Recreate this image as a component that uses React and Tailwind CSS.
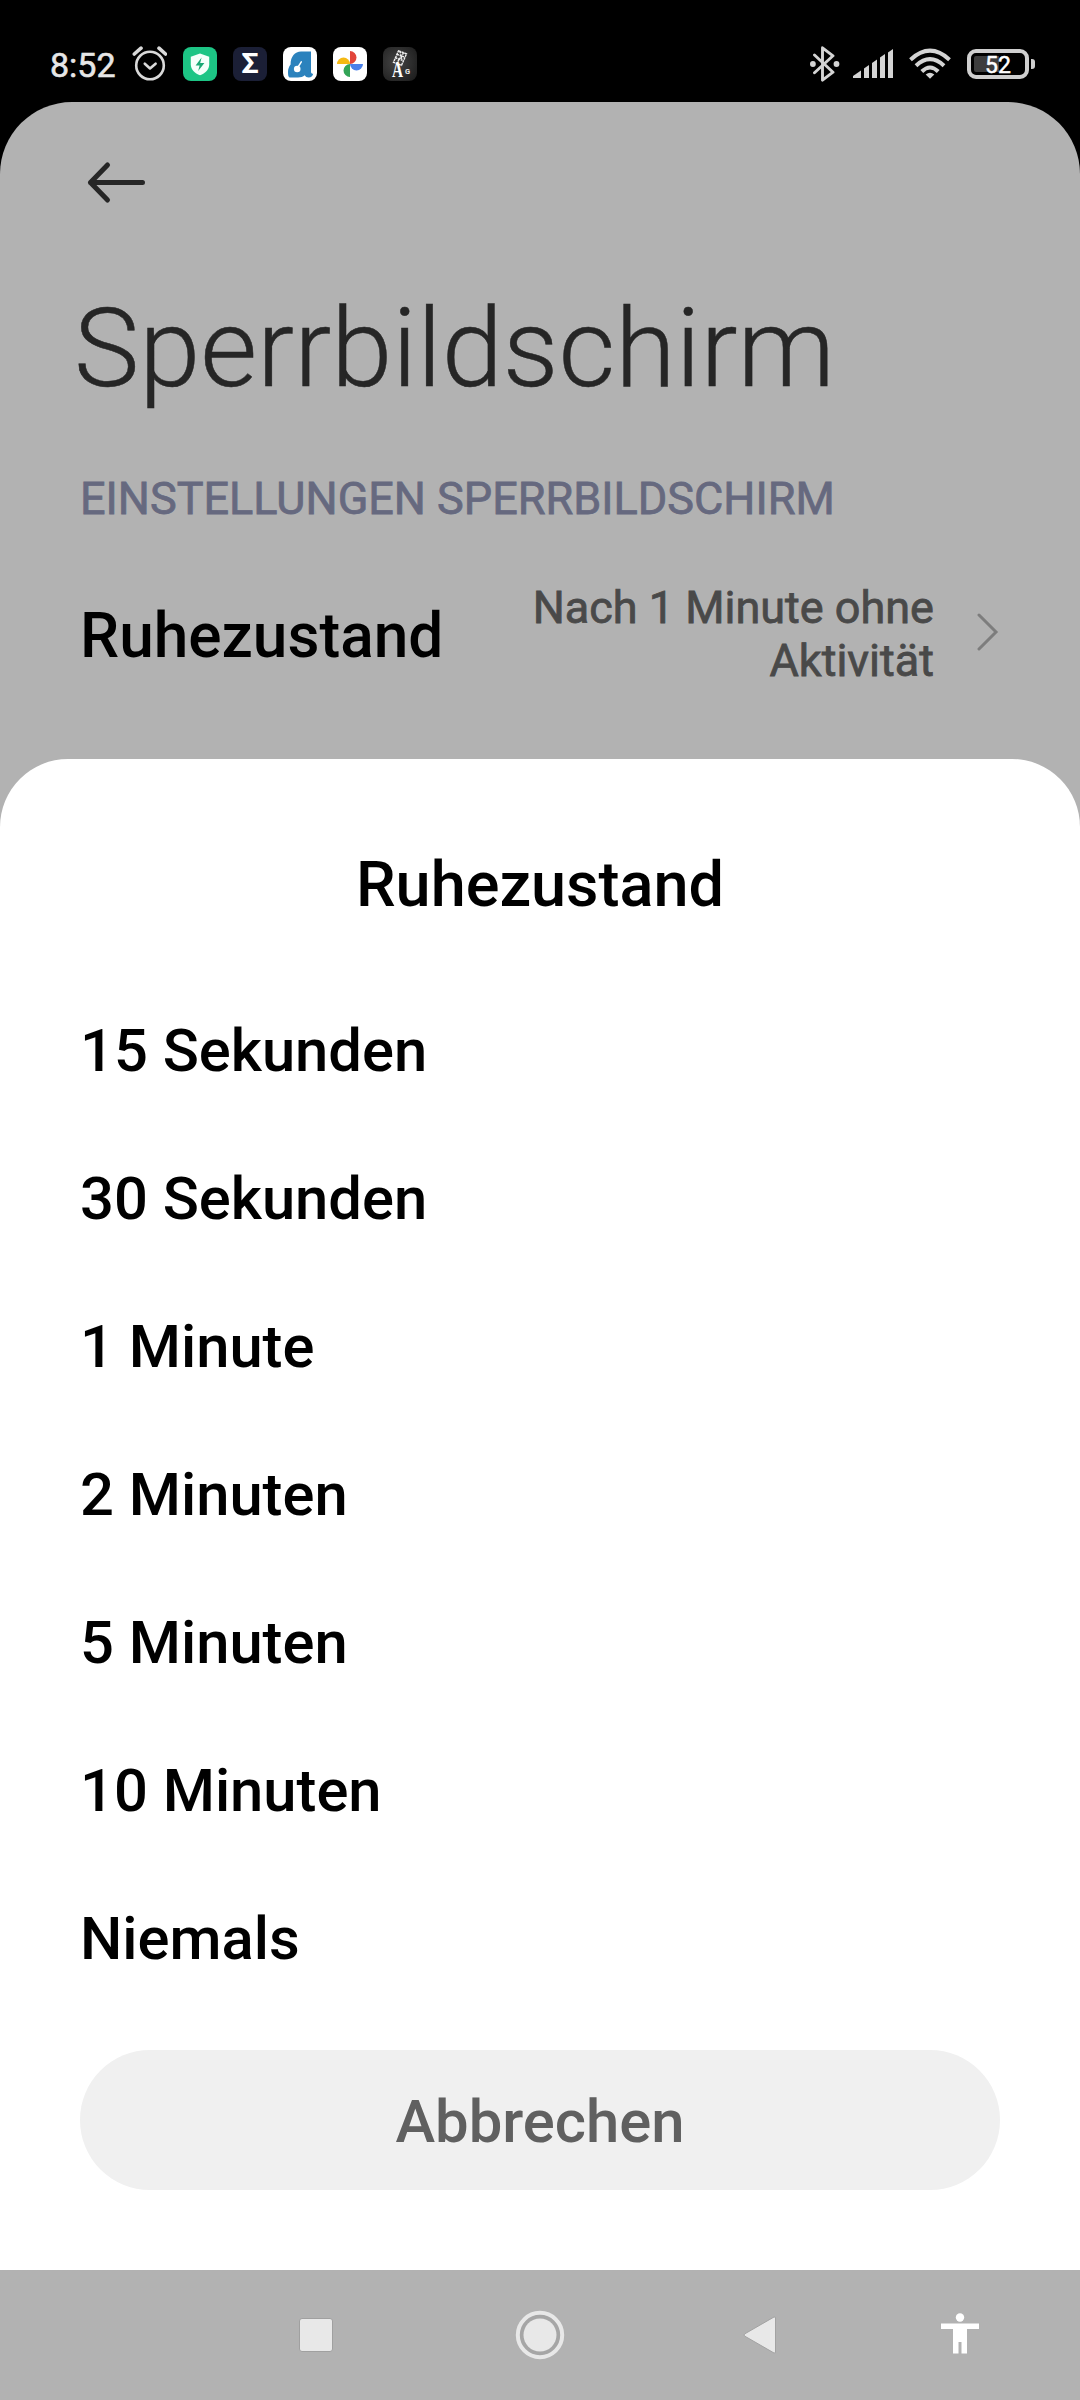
const options = [
  "15 Sekunden",
  "30 Sekunden",
  "1 Minute",
  "2 Minuten",
  "5 Minuten",
  "10 Minuten",
  "Niemals",
];

const AlarmIcon = () => (
  <svg className="h-[36px] w-[35px]" viewBox="0 0 35 36" fill="none" stroke="#d9d9d9" strokeWidth="2.6" strokeLinecap="round" strokeLinejoin="round">
    <circle cx="18" cy="19.5" r="13.8" />
    <path d="M12.8 17.7l5.2 4.8 5.6-4.8" />
    <path d="M2.3 8L9 2.200M27 2.200l6.500 5.800" strokeWidth="3.6" />
  </svg>
);

const ShieldApp = () => (
  <svg className="size-[34px]" viewBox="0 0 34 34">
    <rect width="34" height="34" rx="8" fill="#1dc585" />
    <path d="M17 6.500l9.200 3.300v7.600c0 5-3.800 8.500-9.200 10.900-5.400-2.400-9.200-5.900-9.200-10.900V9.800z" fill="#f4fffa" />
    <path d="M18.600 10.500l-6 8h4l-1.400 5.500 6.200-8h-4.200z" fill="#1aa874" />
  </svg>
);

const SigmaApp = () => (
  <div className="flex size-[34px] items-center justify-center rounded-[8px] bg-[#1b1f36] text-[28px] leading-none font-bold text-white">
    <span className="scale-x-110">Σ</span>
  </div>
);

const BlueApp = () => (
  <svg className="size-[34px]" viewBox="0 0 34 34">
    <rect width="34" height="34" rx="8" fill="#fff" />
    <path d="M18 4.500h10v20.300c0 1.400.8 2 2.200 2-.4 2.400-2.200 3.700-4.400 3.700-2 0-3.200-.8-4-2.200-1.800 1.500-4 2.200-6.800 2.200H6.500C5.300 30 5 28 5 25c0-3 1-5.500 2.600-7.500C7.500 9.500 12 4.700 18 4.500z" fill="#2b82bd" />
    <circle cx="14.200" cy="22" r="3.300" fill="#fff" />
    <path d="M14.500 21l3.800-6.200" stroke="#fff" strokeWidth="1.500" strokeLinecap="round" />
  </svg>
);

const PhotosApp = () => (
  <svg className="size-[34px]" viewBox="0 0 34 34">
    <rect width="34" height="34" rx="8" fill="#fff" />
    <path d="M17 4a6.500 6.500 0 010 13z" fill="#e2453a" />
    <path d="M17 17h13a6.500 6.500 0 01-13 0z" fill="#4a80ea" />
    <path d="M17 17v13a6.500 6.500 0 010-13z" fill="#33a457" />
    <path d="M17 17H4a6.500 6.500 0 0113 0z" fill="#f5b913" />
  </svg>
);

const LadderApp = () => (
  <svg className="size-[34px]" viewBox="0 0 34 34">
    <defs>
      <radialGradient id="dark" cx="0.4" cy="0.45" r="0.7">
        <stop offset="0" stopColor="#444" />
        <stop offset="1" stopColor="#1f1f1f" />
      </radialGradient>
    </defs>
    <rect width="34" height="34" rx="8" fill="url(#dark)" />
    <g fill="none" stroke="#f0f0f0" strokeWidth="1.400">
      <path d="M15.500 3.800l8 3-5 11.500-8-3z" strokeDasharray="2.500 0.600" />
      <path d="M14 7.300l7.500 2.800M12.500 10.800l7.500 2.800M17 4.500l2 9M20.500 6l-6 9" strokeDasharray="2 0.800" />
    </g>
    <text x="9" y="29.500" fontSize="23" fontWeight="700" fontFamily="Liberation Serif, serif" textLength="11" lengthAdjust="spacingAndGlyphs" fill="#fff">A</text>
    <text x="22" y="27" fontSize="7.500" fontWeight="700" fontFamily="Roboto, sans-serif" fill="#eee">G</text>
  </svg>
);

const BluetoothIcon = () => (
  <svg className="h-[36px] w-[30px]" viewBox="0 0 30 36" fill="none" stroke="#d4d4d4" strokeWidth="2.900" strokeLinejoin="round" strokeLinecap="round">
    <path d="M4.500 9l18.500 17.200-10.500 8V1.800L23 9.800 4.500 26.800" />
    <circle cx="2.900" cy="18" r="2.900" fill="#d4d4d4" stroke="none" />
    <circle cx="26.500" cy="18" r="2.900" fill="#d4d4d4" stroke="none" />
  </svg>
);

const SignalIcon = () => (
  <svg className="h-[30px] w-[40px]" viewBox="0 0 40 30" fill="#d4d4d4">
    <path d="M0 27l8-5.500V29H0z" />
    <path d="M11 19.500l5-3.500v13h-5z" />
    <path d="M19 14l5-3.500V29h-5z" />
    <path d="M27 8.500L32 5v24h-5z" />
    <path d="M35 3.500L40 0v29h-5z" />
  </svg>
);

const WifiIcon = () => (
  <svg className="h-[32px] w-[44px]" viewBox="0 0 44 32" fill="none" stroke="#d4d4d4" strokeWidth="4">
    <path d="M2.500 11.700Q22-6.300 41.500 11.700" />
    <path d="M8 17.700Q22 4.700 36 17.700" />
    <path d="M13.800 23.500Q22 15.500 30.200 23.500" />
    <path d="M22 30.800l-4.300-4.300q4.300-3.300 8.600 0z" fill="#d4d4d4" stroke="none" />
  </svg>
);

const Battery = () => (
  <div className="flex items-center gap-[2px]">
    <div className="relative flex h-[30px] w-[62px] items-center rounded-[9px] border-4 border-[#cfcfcf] p-[3px]">
      <div className="h-[16px] w-[25px] rounded-l-[2px] bg-[#3d3d3d]" />
      <span className="absolute inset-0 flex items-center justify-center pt-[2px] text-[23px] leading-none text-white [-webkit-text-stroke:0.5px]">52</span>
    </div>
    <div className="h-[10px] w-[4px] rounded-r-[3px] bg-[#cfcfcf]" />
  </div>
);

const StatusBar = () => (
  <div className="flex h-[102px] items-center justify-between pt-[26px] pr-[45px] pl-[50px]">
    <div className="flex items-center">
      <span className="w-[82px] pt-[2px] text-[34px] leading-none text-[#e6e6e6] [-webkit-text-stroke:0.6px]">8:52</span>
      <div className="flex items-center gap-4">
        <AlarmIcon />
        <ShieldApp />
        <SigmaApp />
        <BlueApp />
        <PhotosApp />
        <LadderApp />
      </div>
    </div>
    <div className="flex items-center">
      <BluetoothIcon />
      <div className="ml-[13px]"><SignalIcon /></div>
      <div className="ml-[15px]"><WifiIcon /></div>
      <div className="ml-[15px]"><Battery /></div>
    </div>
  </div>
);

const SettingsPage = () => (
  <div className="h-[657px] px-[80px]">
    <div className="flex h-[160px] items-center pl-[7px]">
      <svg className="h-[44px] w-[60px]" viewBox="0 0 60 44" fill="none" stroke="#262626" strokeWidth="5" strokeLinecap="round" strokeLinejoin="round">
        <path d="M20.500 5L3.500 22.500l17 17.500M3.500 22.500H55.500" />
      </svg>
    </div>
    <h1 className="mt-[32px] -ml-[6px] text-[110px] leading-[110px] font-light text-[#262626] [-webkit-text-stroke:0.5px]">Sperrbildschirm</h1>
    <h2 className="mt-[68px] text-[45px] leading-[53px] text-[#66697f] [-webkit-text-stroke:0.8px]">EINSTELLUNGEN SPERRBILDSCHIRM</h2>
    <div className="mt-[56px] flex items-center">
      <span className="pt-[3px] text-[62.2px] leading-[74px] font-medium text-black">Ruhezustand</span>
      <span className="ml-auto w-[440px] text-right text-[45px] leading-[53px] text-[#494949] [-webkit-text-stroke:0.8px]">
        Nach 1 Minute ohne Aktivität
      </span>
      <svg className="mr-[1px] mb-[4px] ml-[43px] h-[38px] w-[22px]" viewBox="0 0 22 38" fill="none" stroke="#7d7d7d" strokeWidth="3" strokeLinecap="round">
        <path d="M2 2l17 17L2 36" />
      </svg>
    </div>
  </div>
);

const Sheet = () => (
  <div className="flex h-[1511px] flex-col rounded-t-[68px] bg-white px-[80px] pt-[89px]">
    <h3 className="text-center text-[63px] leading-[74px] font-medium text-black">Ruhezustand</h3>
    <ul className="mt-[55px]">
      {options.map((o) => (
        <li key={o} className="flex h-[148px] items-center pt-[2px] text-[59.7px] leading-none font-medium text-black">
          {o}
        </li>
      ))}
    </ul>
    <button type="button" className="mt-[37px] h-[140px] rounded-full bg-[#f0f0f0] pt-[6px] text-[59.8px] leading-none font-medium text-[#606060]">
      Abbrechen
    </button>
  </div>
);

const NavBar = () => (
  <div className="flex h-[130px] items-center bg-[#b2b2b2] pl-[204px]">
    <div className="flex w-[224px] justify-center">
      <div className="size-[34px] rounded-[3px] border border-[#a0a0a0] bg-[#e8e8e8]" />
    </div>
    <div className="flex w-[223px] justify-center">
      <svg className="size-[52px]" viewBox="0 0 52 52">
        <circle cx="26" cy="26" r="22.200" fill="#a6a6a6" stroke="#e8e8e8" strokeWidth="4" />
        <circle cx="26" cy="26" r="16.500" fill="#e8e8e8" />
      </svg>
    </div>
    <div className="flex w-[218px] justify-center">
      <svg className="h-[40px] w-[36px]" viewBox="0 0 36 40">
        <path d="M2.500 19L32 2q1.500-.5 1.500 1v34q0 1.500-1.500 1L2.500 21q-1-1 0-2z" fill="#e8e8e8" stroke="#a2a2a2" strokeWidth="1" strokeLinejoin="round" />
      </svg>
    </div>
    <div className="flex w-[182px] justify-center pb-[5px]">
      <svg className="h-[42px] w-[38px]" viewBox="0 0 38 42" fill="#fff">
        <circle cx="19" cy="5.500" r="4.200" />
        <path d="M0 11.500h38v5.500H26v24.500h-5.500V30h-3v11.500H12V17H0z" />
      </svg>
    </div>
  </div>
);

export default function App() {
  return (
    <div className="h-[2400px] w-[1080px] overflow-hidden bg-black font-['Roboto',sans-serif]">
      <StatusBar />
      <div className="rounded-t-[72px] bg-[#b2b2b2]">
        <SettingsPage />
        <Sheet />
        <NavBar />
      </div>
    </div>
  );
}
